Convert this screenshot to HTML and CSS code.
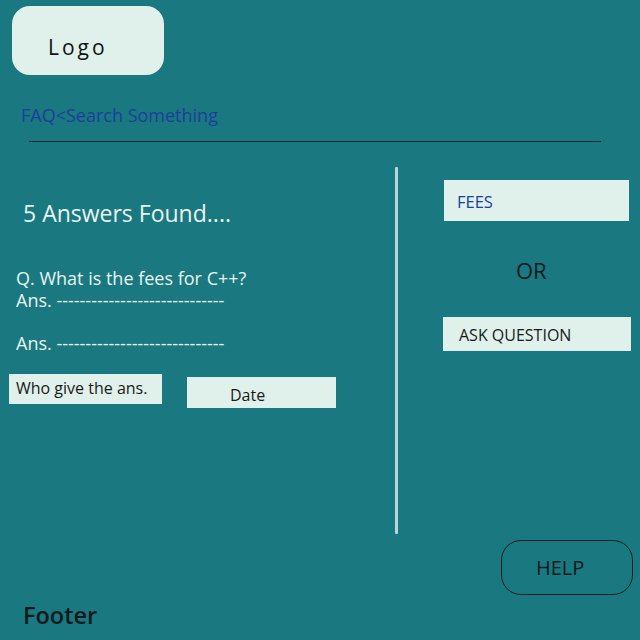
FILE: index.html
```html
<!DOCTYPE html>
<html>
<head>
<meta charset="utf-8">
<link rel="stylesheet" href="styles.css">
</head>
<body>
<header class="header">
  <div class="logo">Logo</div>
</header>
<section class="search">
  <div class="crumb">FAQ&lt;Search Something</div>
  <div class="rule"></div>
</section>
<main class="main">
  <div class="left">
    <h1 class="found">5 Answers Found....</h1>
    <div class="qa">
      <div>Q. What is the fees for C++?</div>
      <div>Ans. -----------------------------</div>
      <div class="ans2">Ans. -----------------------------</div>
    </div>
    <div class="meta">
      <div class="who">Who give the ans.</div>
      <div class="date">Date</div>
    </div>
  </div>
  <div class="divider"></div>
  <div class="right">
    <div class="fees">FEES</div>
    <div class="or">OR</div>
    <div class="ask">ASK QUESTION</div>
  </div>
</main>
<div class="helprow">
  <div class="help">HELP</div>
</div>
<footer class="footer">Footer</footer>
</body>
</html>
```
FILE: styles.css
```css
html, body {
  margin: 0;
  padding: 0;
}
body {
  width: 640px;
  height: 640px;
  overflow: hidden;
  background: #1a7880;
  font-family: "Open Sans", "Noto Sans", sans-serif;
  color: #0d1a1c;
}
.header {
  padding: 6px 0 0 12px;
}
.logo {
  width: 152px;
  height: 69px;
  box-sizing: border-box;
  background: #dff1ea;
  border-radius: 18px;
  padding: 12px 0 0 36px;
  display: flex;
  align-items: center;
  font-size: 21px;
  letter-spacing: 3px;
  color: #111;
}
.search {
  padding: 28px 0 0 21px;
}
.crumb {
  font-size: 18px;
  line-height: 24px;
  color: #1c3f9c;
}
.rule {
  margin: 14px 0 0 8px;
  width: 572px;
  height: 1px;
  background: #0e2a33;
}
.main {
  display: flex;
  margin-top: 25px;
}
.left {
  width: 386px;
  padding-left: 9px;
}
.found {
  margin: 31px 0 0 14px;
  font-size: 23px;
  font-weight: 400;
  line-height: 30px;
  color: #e8f4f0;
}
.qa {
  margin: 39px 0 0 7px;
  font-size: 18px;
  line-height: 22px;
  color: #e8f4f0;
}
.ans2 {
  margin-top: 21px;
}
.meta {
  display: flex;
  align-items: flex-start;
  margin-top: 20px;
  gap: 25px;
}
.who {
  width: 153px;
  height: 30px;
  box-sizing: border-box;
  background: #dff1ea;
  font-size: 16px;
  line-height: 28px;
  padding-left: 7px;
  color: #1a1a1a;
}
.date {
  margin-top: 3px;
  width: 149px;
  height: 31px;
  box-sizing: border-box;
  background: #dff1ea;
  font-size: 16px;
  line-height: 36px;
  padding-left: 43px;
  color: #1a1a1a;
}
.divider {
  width: 3px;
  height: 367px;
  background: #b9d6d6;
  border-radius: 1px;
}
.right {
  padding: 13px 0 0 46px;
}
.fees {
  width: 185px;
  height: 41px;
  box-sizing: border-box;
  background: #dff1ea;
  font-size: 16.5px;
  line-height: 43px;
  padding-left: 13px;
  color: #1c3f9c;
}
.or {
  margin: 35px 0 0 72px;
  font-size: 22px;
  line-height: 28px;
  color: #0d1a1c;
}
.ask {
  margin: 33px 0 0 -1px;
  width: 188px;
  height: 34px;
  box-sizing: border-box;
  background: #dff1ea;
  font-size: 16px;
  line-height: 37px;
  padding-left: 16px;
  color: #1a1a1a;
}
.helprow {
  display: flex;
  justify-content: flex-end;
  padding-right: 7px;
  margin-top: 6px;
}
.help {
  width: 132px;
  height: 55px;
  box-sizing: border-box;
  border: 1px solid #0d1f25;
  border-radius: 20px;
  display: flex;
  align-items: center;
  padding: 0 0 0 34px;
  font-size: 20px;
  color: #0d1a1c;
}
.footer {
  padding: 5px 0 0 23px;
  font-size: 23.5px;
  line-height: 30px;
  font-weight: 600;
  color: #0d1a1c;
}
```
